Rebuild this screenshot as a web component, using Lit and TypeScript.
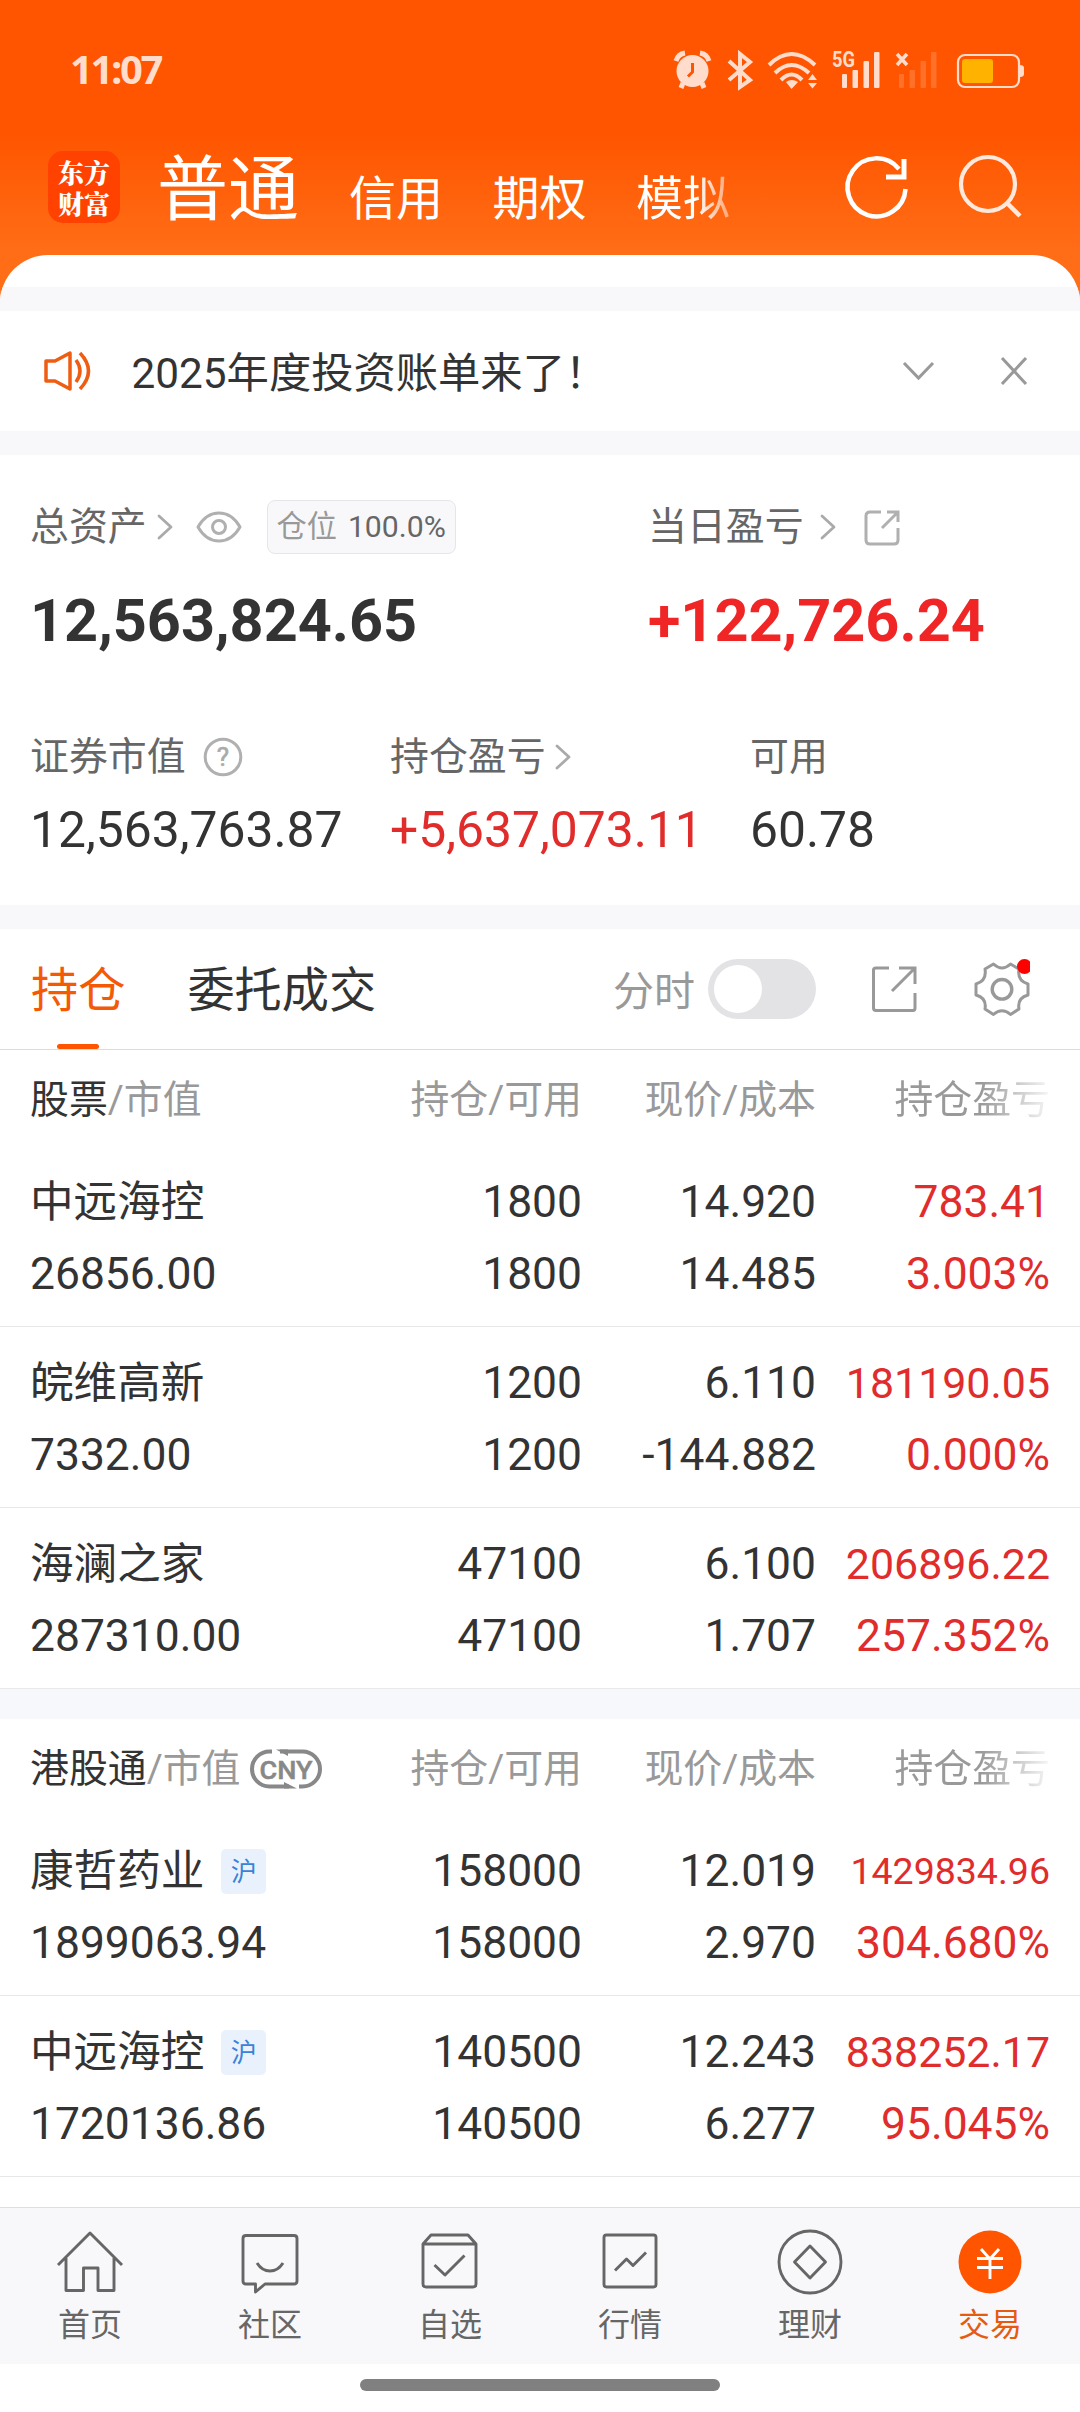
import { LitElement, html, css, svg } from "lit";
import { customElement } from "lit/decorators.js";

interface Row { name: string; value: string; qty: string; avail: string; price: string; cost: string; pl: string; pct: string; hu?: boolean; size?: string; }

const stocks: Row[] = [
  { name: "中远海控", value: "26856.00", qty: "1800", avail: "1800", price: "14.920", cost: "14.485", pl: "783.41", pct: "3.003%" },
  { name: "皖维高新", value: "7332.00", qty: "1200", avail: "1200", price: "6.110", cost: "-144.882", pl: "181190.05", pct: "0.000%", size: "mid" },
  { name: "海澜之家", value: "287310.00", qty: "47100", avail: "47100", price: "6.100", cost: "1.707", pl: "206896.22", pct: "257.352%", size: "mid" },
];
const hk: Row[] = [
  { name: "康哲药业", value: "1899063.94", qty: "158000", avail: "158000", price: "12.019", cost: "2.970", pl: "1429834.96", pct: "304.680%", hu: true, size: "small" },
  { name: "中远海控", value: "1720136.86", qty: "140500", avail: "140500", price: "12.243", cost: "6.277", pl: "838252.17", pct: "95.045%", hu: true, size: "mid" },
];

const chevron = svg`<path d="M2 2L14 13L2 24" fill="none" stroke="#aaa" stroke-width="2.800" stroke-linecap="round" stroke-linejoin="round"/>`;

const navIcons = [
  svg`<path d="M8 41L40 9L72 41M16 34V66.500H33.500V44H48V66.500H64V34"/>`,
  svg`<path d="M16 11.500H64Q67 11.500 67 14.500V57Q67 60 64 60H35L25.500 68V60H16Q13 60 13 57V14.500Q13 11.500 16 11.500ZM27 39Q32 47 40 47Q48 47 53 39"/>`,
  svg`<path d="M13 20V60Q13 63 16 63H63Q66 63 66 60V20L58 11H21ZM13 20H66M24.500 41L35 51L54.500 31.500"/>`,
  svg`<rect x="14" y="11" width="52" height="52" rx="2.500"/><path d="M25 46.500L36.500 35L43 41.500L56 28.500"/>`,
  svg`<circle cx="40" cy="38" r="31"/><path d="M40 22L55.500 38L40 54L24.500 38Z"/>`,
  svg`<circle cx="40" cy="38" r="31.500" fill="#ff5500" stroke="none"/><path stroke="#fff" d="M31 25L40 35L49 25M40 35V55M27 34.500H53M27 43.500H53"/>`,
];
const navNames = ["首页", "社区", "自选", "行情", "理财", "交易"];

@customElement("app-root")
export class AppRoot extends LitElement {
  static styles = css`
    :host { display: block; width: 1080px; height: 2412px; overflow: hidden; background: #fff; color: #333; font-family: Roboto, "Noto Sans CJK SC", sans-serif; }
    * { box-sizing: border-box; }
    svg { display: block; flex: none; }
    .page { display: flex; flex-direction: column; height: 2412px; }
    .head { height: 311px; flex: none; display: flex; flex-direction: column; background: linear-gradient(#ff5500 0, #ff5500 133px, #ff6e17 255px, #ff6e17 290px, #fff 306px); }
    .status { height: 138px; padding: 2px 56px 0 70px; display: flex; align-items: center; justify-content: space-between; color: #ffdccc; font: 700 40px "Open Sans", sans-serif; }
    .clock { letter-spacing: -2.4px; margin-top: -3px; }
    .sysicons { margin-top: 4px; }
    .top { height: 117px; display: flex; align-items: flex-start; color: #fff; }
    .logo { margin: 13px 0 0 48px; width: 72px; height: 72px; border-radius: 15px; background: #ff4200; display: flex; flex-direction: column; justify-content: center; align-items: center; font: 900 26px/31px "Noto Serif CJK SC", "Noto Sans CJK SC", serif; }
    .main { margin: 2px 0 0 37px; font-size: 71px; line-height: 100px; width: 150px; white-space: nowrap; }
    .sub { font-size: 47px; line-height: 70px; margin: 26px 0 0 42px; white-space: nowrap; }
    .sub + .sub { margin-left: 49.5px; }
    .fade { background: linear-gradient(90deg, #fff 60px, #ffffff60 96px); -webkit-background-clip: text; color: transparent; }
    .topicons { margin-left: auto; }
    .sheet { height: 56px; flex: none; border-radius: 48px 48px 0 0; overflow: hidden; background: #fff; padding-top: 32px; }
    .band { height: 24px; flex: none; background: #f8f8fb; }
    .notice { height: 120px; flex: none; display: flex; align-items: center; padding: 0 50px 0 41.5px; font-size: 42.3px; }
    .notice span { margin: -3px 0 0 38px; flex: 1; }
    .assets { height: 450px; flex: none; padding: 0 30px; display: flex; flex-direction: column; color: #666; }
    .lab { display: flex; align-items: center; font-size: 38.9px; line-height: 56px; height: 55px; white-space: nowrap; }
    .a1 { display: flex; height: 224px; padding-top: 44px; }
    .a1 > div:first-child { width: 618px; }
    .c1 { margin-left: 10px; }
    .c2 { margin-left: 16px; }
    .c3 { margin-left: 9px; }
    .eye { margin-left: 23px; }
    .ext { margin: 2px 0 0 28px; }
    .help { margin: 1px 0 0 17px; }
    .tag { margin-left: 25px; height: 54px; width: 189px; border: 1.5px solid #e6e6ea; border-radius: 8px; background: #f8f8fb; display: flex; align-items: center; justify-content: center; gap: 11px; font-size: 30.2px; color: #666; }
    .tag i { font-style: normal; color: #999; }
    .big { font-weight: 700; font-size: 59.4px; line-height: 72px; margin-top: 31px; color: #333; }
    .a1 .red { color: #f02626; }
    .a2 { display: grid; grid-template-columns: 360px 360px 1fr; padding-top: 50px; }
    .num { font-size: 49.8px; line-height: 60px; margin-top: 16px; color: #333; }
    .red, .num.red { color: #e12c2c; }
    .tabs { height: 121px; flex: none; display: flex; align-items: center; padding: 0 50px 0 31px; border-bottom: 1px solid #dcdcde; font-size: 47.2px; white-space: nowrap; }
    .tab { height: 120px; line-height: 124px; display: flex; flex-direction: column; align-items: center; }
    .on { color: #f45a05; }
    .on::after { content: ""; width: 42px; height: 6px; border-radius: 3px; background: #ff5500; margin-top: -9px; }
    .second { margin-left: 62px; }
    .fs { margin: -2px 0 0 auto; font-size: 41px; color: #999; }
    .switch { margin-left: 13px; width: 108px; height: 60px; border-radius: 30px; background: #e3e3e6; padding: 6px; }
    .switch::after { content: ""; display: block; width: 48px; height: 48px; border-radius: 50%; background: #fff; }
    .tools { margin: 1px 0 0 54px; }
    .cols { display: grid; grid-template-columns: 321px 231px 234px 234px; padding: 0 30px; text-align: right; white-space: nowrap; }
    .cols > :first-child { text-align: left; }
    .th { height: 96px; flex: none; line-height: 100px; font-size: 38.9px; color: #999; }
    .th b { font-weight: 400; color: #333; }
    .th .first { display: flex; align-items: center; }
    .cny { margin-left: 8px; }
    .lastfade { background: linear-gradient(90deg, #999 0, #999 165px, #9990 240px); -webkit-background-clip: text; color: transparent; }
    .tr { height: 181px; flex: none; border-bottom: 1px solid #e8e8ea; font-size: 44.4px; line-height: 72px; padding-top: 20px; }
    .nm { display: flex; align-items: center; font-size: 43.6px; height: 72px; padding-top: 2px; }
    .hu { margin: -2px 0 0 17px; width: 45px; height: 45px; border-radius: 5px; background: #e9f2fc; color: #3a82d8; font-size: 26px; line-height: 46px; text-align: center; }
    .val { display: block; }
    .mid { font-size: 42.9px; }
    .small { font-size: 37.5px; }
    .mid, .small { display: block; height: 72px; }
    .gap { height: 30px; flex: none; background: #f6f8fb; }
    .rest { flex: 1; }
    .nav { height: 157px; flex: none; background: #f8f8fb; border-top: 1px solid #dedfe2; display: grid; grid-template-columns: repeat(6, 1fr); font-size: 32px; color: #666; }
    .nav div { display: flex; flex-direction: column; align-items: center; padding-top: 16px; }
    .nav span { line-height: 40px; margin-top: 5px; }
    .nav .act { color: #e55b12; }
    .home { height: 48px; flex: none; display: flex; justify-content: center; padding-top: 15px; }
    .home i { width: 360px; height: 12px; border-radius: 6px; background: #808080; }
  `;

  private header(title: string, cny: boolean) {
    return html`<div class="cols th">
      <div class="first"><b>${title}</b>/市值${cny ? html`<svg class="cny" width="74" height="42" viewBox="0 0 74 42"><g fill="none" stroke="#888" stroke-width="4"><path d="M23 3.500H20.500A17.500 17.500 0 0 0 20.500 38.500H40"/><path d="M50 38.500H53.500A17.500 17.500 0 0 0 53.500 3.500H31"/></g><path d="M27 1.500L39 8V1.500ZM35 40.500V34L48 40.500Z" fill="#888"/><text x="37" y="30.500" text-anchor="middle" font-size="26.500" font-weight="500" fill="#888" stroke="#888" stroke-width=".5" textLength="53" lengthAdjust="spacingAndGlyphs">CNY</text></svg>` : ""}</div>
      <div>持仓/可用</div><div>现价/成本</div><div class="lastfade">持仓盈亏</div></div>`;
  }
  private row(r: Row) {
    return html`<div class="cols tr">
      <div><div class="nm">${r.name}${r.hu ? html`<span class="hu">沪</span>` : ""}</div>${r.value}</div>
      <div>${r.qty}<br />${r.avail}</div><div>${r.price}<br />${r.cost}</div>
      <div class="red"><span class="val ${r.size ?? ""}">${r.pl}</span>${r.pct}</div></div>`;
  }

  render() {
    return html`<div class="page">
      <div class="head">
        <div class="status"><span class="clock">11:07</span>
          <svg class="sysicons" width="352" height="60" viewBox="672 42 352 60" fill="#ffdccc" stroke="#ffdccc" stroke-width="0">
            <circle cx="692.500" cy="71" r="16"/><g fill="none" stroke-width="5"><path d="M676 61Q678 54 685 53M700 53Q707 54 709 61M683 83L681 88M702 83L704 88"/></g><path d="M692.500 63V72L688 76.500" fill="none" stroke="#ff5500" stroke-width="3"/>
            <path d="M729 61L750 80L740 87V54L750 62L729 80" fill="none" stroke-width="4"/>
            <g fill="none" stroke-width="4"><path d="M769 65Q791.500 43 815 65"/><path d="M775 73Q791.500 57 809 73"/><path d="M781 80Q791.500 69 802 80"/></g><path d="M786 82Q791.500 78 798 82L791.500 89ZM808 80L812.500 74L817 80ZM808 83L812.500 88.500L817 83Z"/>
            <text x="832" y="67" font-family="Roboto" font-weight="700" font-size="22" textLength="23" lengthAdjust="spacingAndGlyphs">5G</text>
            <rect x="842" y="74" width="5" height="14" rx="1"/><rect x="852.500" y="70" width="5.500" height="18" rx="1"/><rect x="863.500" y="61" width="5.500" height="27" rx="1"/><rect x="874" y="52" width="5.500" height="36" rx="1"/>
            <path d="M897 54L907 65M907 54L897 65" fill="none" stroke-width="3.500"/>
            <g opacity=".2"><rect x="899" y="74" width="5" height="14" rx="1"/><rect x="909.500" y="70" width="5.500" height="18" rx="1"/><rect x="920.500" y="61" width="5.500" height="27" rx="1"/><rect x="931" y="52" width="5.500" height="36" rx="1"/></g>
            <rect x="958" y="55" width="61" height="32" rx="7" fill="none" stroke-width="2.200"/><path d="M1020 65Q1024 65 1024 68V74Q1024 77 1020 77Z"/><rect x="962" y="59" width="31" height="24" rx="3" fill="#ffb300"/>
          </svg></div>
        <div class="top"><div class="logo"><span>东方</span><span>财富</span></div><div class="main">普通</div><div class="sub">信用</div><div class="sub">期权</div><div class="sub fade">模拟</div>
          <svg class="topicons" width="240" height="90" viewBox="839 138 240 90" fill="none"><path d="M904.500 189A29 29 0 1 1 898 169" stroke="#fff" stroke-width="4.500"/><path d="M903 159V177H885" stroke="#fff" stroke-width="5"/><circle cx="987" cy="184" r="27" stroke="#ffe8dc" stroke-width="4.200"/><path d="M1006 203L1019 216" stroke="#ffe8dc" stroke-width="4.500"/></svg></div>
        <div class="sheet"><div class="band"></div></div>
      </div>
      <div class="notice"><svg width="52" height="46" viewBox="40 348 52 46" fill="none" stroke="#ee5d12" stroke-width="3.500" stroke-linejoin="round"><path d="M44 361H53L68 353V389L53 381H44Z"/><path d="M74 360Q82 371 74 382M78 353Q95 371 78 389"/></svg><span>2025年度投资账单来了！</span>
        <svg width="130" height="34" viewBox="0 0 130 34" fill="none" stroke="#999" stroke-width="3"><path d="M4 9L18.500 24L33 9M102 4L126 30M126 4L102 30"/></svg></div>
      <div class="band"></div>
      <div class="assets">
        <div class="a1"><div><div class="lab">总资产<svg class="c1" width="16" height="26" viewBox="0 0 16 26">${chevron}</svg><svg class="eye" width="46" height="34" viewBox="0 0 46 34" fill="none" stroke="#b0b0b0" stroke-width="3" stroke-linejoin="round"><path d="M2 17Q10 3 23 3Q36 3 44 17Q36 31 23 31Q10 31 2 17Z"/><circle cx="23" cy="17" r="6.500"/></svg><div class="tag"><i>仓位</i>100.0%</div></div><div class="big">12,563,824.65</div></div>
        <div><div class="lab">当日盈亏<svg class="c2" width="16" height="26" viewBox="0 0 16 26">${chevron}</svg><svg class="ext" width="36" height="36" viewBox="0 0 36 36" fill="none" stroke="#b0b0b0" stroke-width="3"><path d="M17 2H6Q2 2 2 6V30Q2 34 6 34H30Q34 34 34 30V18M23 2H34V12M34 2L18 18"/></svg></div><div class="big red">+122,726.24</div></div></div>
        <div class="a2"><div><div class="lab">证券市值<svg class="help" width="40" height="40" viewBox="0 0 40 40"><circle cx="20" cy="20" r="17.800" fill="none" stroke="#b0b0b0" stroke-width="3"/><text x="20" y="29" text-anchor="middle" font-size="26" fill="#aaa" stroke="#aaa" stroke-width=".6">?</text></svg></div><div class="num">12,563,763.87</div></div>
        <div><div class="lab">持仓盈亏<svg class="c3" width="16" height="26" viewBox="0 0 16 26">${chevron}</svg></div><div class="num red">+5,637,073.11</div></div>
        <div><div class="lab">可用</div><div class="num">60.78</div></div></div>
      </div>
      <div class="band"></div>
      <div class="tabs"><div class="tab on">持仓</div><div class="tab second">委托成交</div><div class="fs">分时</div><div class="switch"></div>
        <svg class="tools" width="160" height="64" viewBox="870 958 160 64" fill="none" stroke="#999" stroke-width="3"><path d="M889 968H876Q873.500 968 873.500 970V1008Q873.500 1010.500 876 1010.500H913Q915 1010.500 915 1008V993M899 968H915V984M914 969L892 991"/><path d="M993.500 964Q1002 972 1010.500 964L1019 969Q1017 981 1028 984V995Q1017 998 1019 1009L1010.500 1014.500Q1002 1007 993.500 1014.500L985 1009Q987 998 976 995V984Q987 981 985 969Z" stroke-linejoin="round"/><circle cx="1002" cy="989.300" r="9.800" stroke-width="3.400"/><circle cx="1024.500" cy="966.500" r="7.500" fill="#f00" stroke="none"/></svg></div>
      ${this.header("股票", false)}${stocks.map((r) => this.row(r))}
      <div class="gap"></div>
      ${this.header("港股通", true)}${hk.map((r) => this.row(r))}
      <div class="rest"></div>
      <div class="nav">${navNames.map((n, i) => html`<div class=${i === 5 ? "act" : ""}><svg width="80" height="76" viewBox="0 0 80 76" fill="none" stroke="#666" stroke-width="2.900" stroke-linejoin="round">${navIcons[i]}</svg><span>${n}</span></div>`)}</div>
      <div class="home"><i></i></div>
    </div>`;
  }
}
